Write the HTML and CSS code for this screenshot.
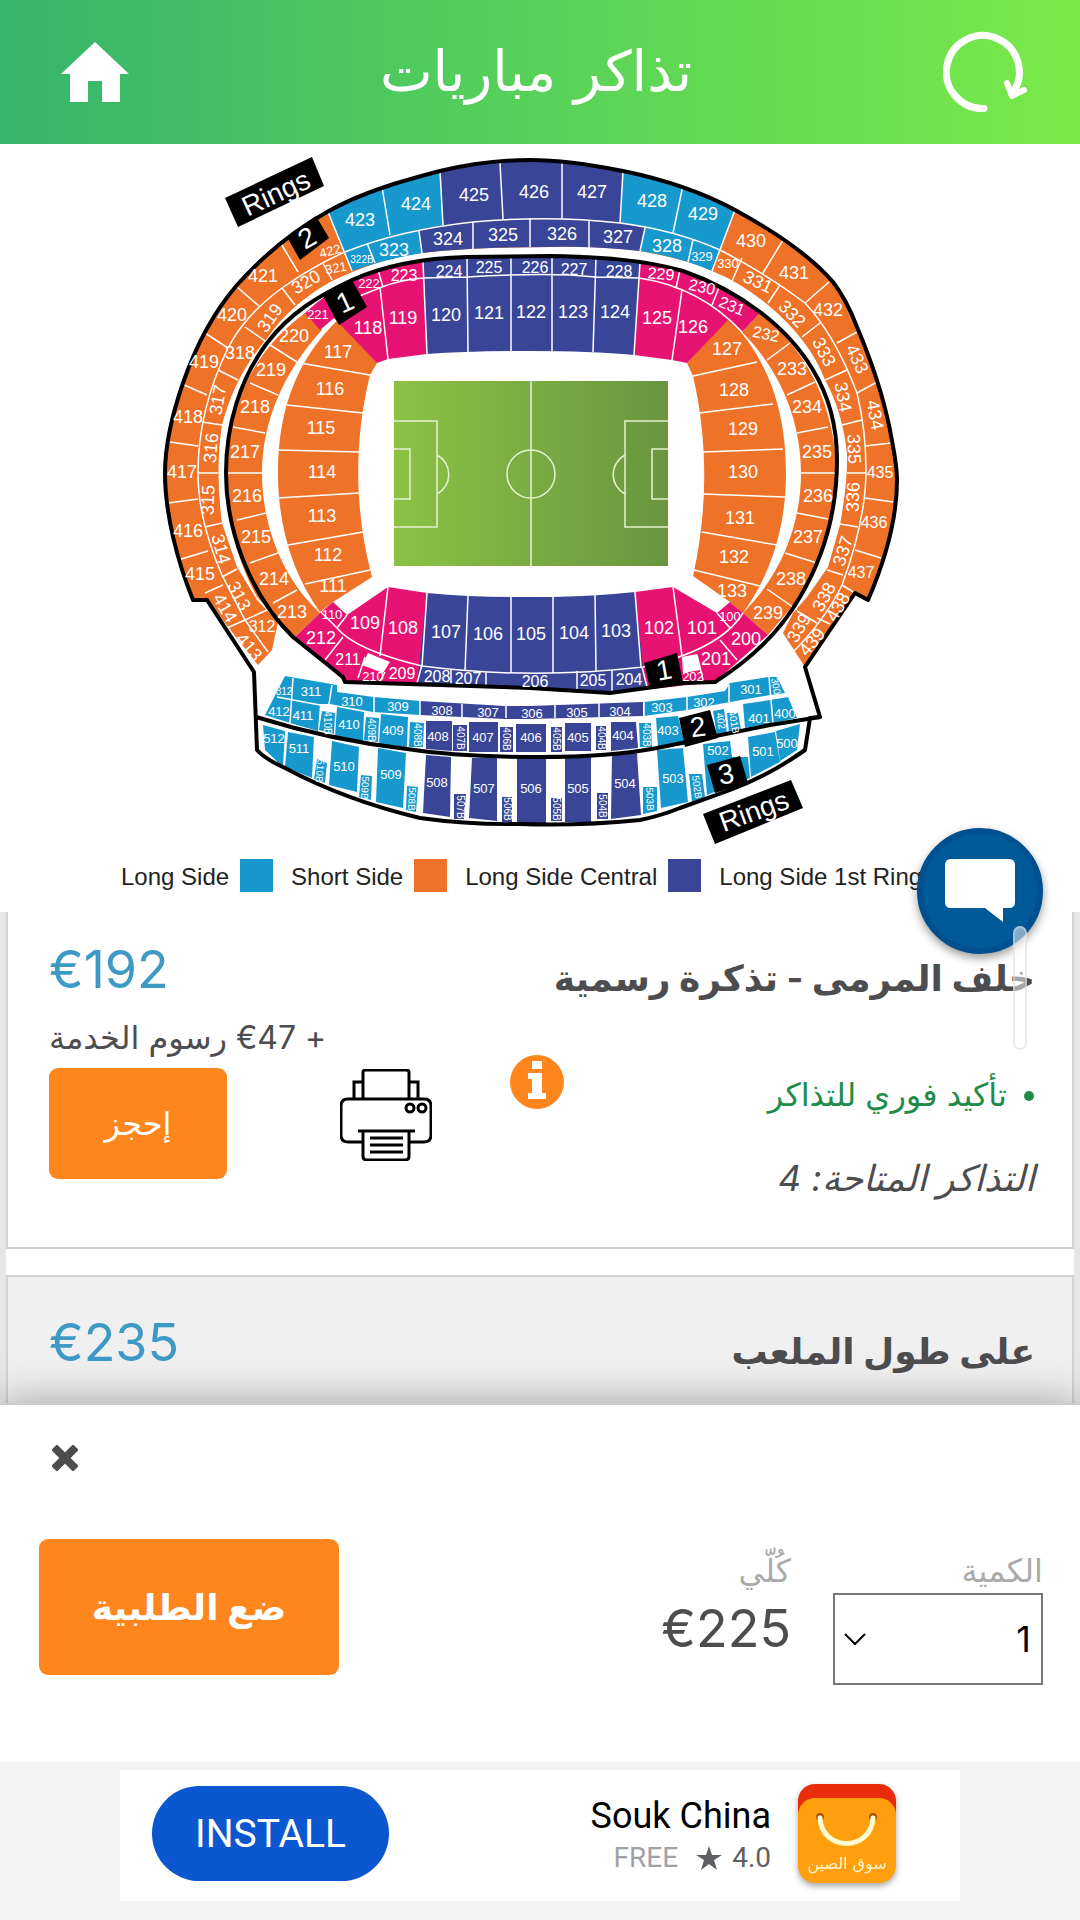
FILE: index.html
```html
<!DOCTYPE html>
<html lang="ar" dir="rtl">
<head>
    <meta charset="UTF-8">
    <meta name="viewport" content="width=device-width, initial-scale=1.0">
    <title>تذاكر مباريات</title>
    <link rel="stylesheet" href="styles.css">
</head>
<body>
    <header class="top-bar">
        <button class="icon-button" type="button" aria-label="تحديث">
            <svg width="84" height="84" viewBox="0 0 84 84" fill="none" stroke="#fff" stroke-linecap="round" stroke-linejoin="round">
                <path d="M41 78.5A36.5 36.5 0 1 1 69 64" stroke-width="7"/>
                <path d="M64 53L69 66L81 60" stroke-width="6"/>
            </svg>
        </button>
        <h1>تذاكر مباريات</h1>
        <a class="icon-button" href="#" aria-label="الرئيسية">
            <svg width="68" height="60" viewBox="0 0 68 60">
                <path d="M34 0L68 32H59V60H41V39H27V60H9V32H0Z" fill="#fff"/>
            </svg>
        </a>
    </header>

    <section class="stadium">
        <svg class="stadium-map" viewBox="0 144 1080 704" role="img" aria-label="Stadium map">
            <defs>
                <linearGradient id="grass">
                    <stop offset="0" stop-color="#8bc244"/>
                    <stop offset="1" stop-color="#69953f"/>
                </linearGradient>
            </defs>

            <!-- Upper ring -->
            <path class="short" d="M207 600H193C178 563 165 515 165 473C165 442 173 412 183 383C195 348 213 313 237 285C263 256 293 231 327 212C362 192 402 181 440 171C469 164 500 160 530 160C561 160 593 165 623 171C662 179 700 191 735 210C770 229 808 253 833 282C843 295 851 311 857 327C871 360 883 395 890 430C893 447 897 463 897 480C897 521 884 563 868 600L855 593L805 667L783 633L793 613L807 597L828 567L840 525Q848 480 847 453Q842 410 825 380Q810 340 768 305Q740 282 712 271Q690 260 640 251Q590 245 550 247Q470 247 422 253Q380 258 330 282Q290 305 268 337Q235 375 222 425Q215 470 222 523L237 567L257 600L278 622L272 650L258 665Z"/>
            <path class="long" d="M327 212C362 192 402 181 440 171L443 225L419 231L422 253Q385 259 352 271Z"/>
            <path class="long" d="M735 210C700 191 662 179 623 171L620 223L645 228L640 251Q680 257 712 271Z"/>
            <path class="central" d="M440 171C469 164 500 160 530 160C561 160 593 165 623 171L620 223L645 228L640 251Q590 246 550 247Q470 247 422 253L419 230L443 225Z"/>
            <path class="line" d="M268 652L245 620L222 575Q198 520 198 473Q198 410 228 348Q245 315 282 288Q315 265 345 252Q400 230 473 222Q550 215 620 223Q675 230 720 250Q765 273 805 303Q835 335 857 393Q866 430 866 470Q866 520 842 585Q825 620 793 652"/>
            <path class="line" d="M382 187L390 235M440 171L443 225M500 163L503 219M562 162V219M623 171L620 223M683 185L673 233M735 210L712 271M783 240L763 273M829 282L805 303M857 332L837 343M877 382L857 393M891 443L865 446M893 502L865 498M881 558L855 550M855 593L842 585M830 624L817 618M328 212L352 271M280 242L298 272M237 287L259 306M205 333L228 348M182 384L207 395M170 442L198 446M168 503L198 499M178 560L208 551M205 593L223 585M227 628L245 620"/>
            <path class="line" d="M323 263L332 280M282 288L295 305M245 327L268 343M218 370L238 380M202 422L222 425M198 473H218M205 527L222 523M222 577L237 569M245 620L267 610M367 243L375 263M419 231L422 253M473 222V249M530 218V247M589 220V248M645 228L640 251M693 240L688 262M742 258L732 281M780 285L768 303M820 323L802 337M847 370L825 380M862 420L842 425M866 473H847M858 527L840 524M843 575L827 570M817 623L797 611"/>

            <!-- First ring, top and sides -->
            <path class="short" d="M305 313L322 330C285 370 262 420 262 473C262 525 282 578 320 613L295 637L257 597Q226 540 226 473Q228 370 305 313Z"/>
            <path class="short" d="M760 313L742 332C780 370 801 420 801 473C801 525 781 575 743 613L768 635L800 597Q837 540 837 473Q832 370 760 313Z"/>
            <path class="short" d="M340 318C300 355 278 405 278 473C278 525 292 573 320 612L333 602L372 577C354 510 354 440 370 375L377 363Z"/>
            <path class="short" d="M728 318C765 355 786 405 786 473C786 525 772 573 743 613L730 602L693 576C708 510 708 440 693 376L687 363Z"/>
            <path class="first" d="M305 313Q350 270 423 260L427 354L388 359L377 363L334 318L320 330Z"/>
            <path class="first" d="M760 313Q710 270 640 263L634 355L672 360L687 363L728 320L742 332Z"/>
            <path class="central" d="M423 260Q467 255 550 256Q600 256 640 263L634 355Q590 351 530 351Q470 351 427 354Z"/>
            <path class="line" d="M340 310L362 295L382 287Q400 280 423 278L467 277Q550 272 595 277L639 278Q700 287 742 332M380 287L388 359M423 262L427 354M467 258L468 352M511 258V351M552 258V351M596 257L593 352M640 263L634 355M682 290L672 360M378 270L383 287M680 270L676 288M720 285L712 305"/>
            <path class="line" d="M267 343L297 362M250 383L278 395M233 427L265 433M227 473H262M237 520L266 513M250 563L278 553M273 603L297 590M767 360L790 343M787 395L815 382M797 433L828 427M801 473H835M797 513L828 519M785 553L817 563M767 589L797 610"/>
            <path class="line" d="M300 363L370 375M287 405L363 413M279 450L359 452M278 498L359 493M288 545L363 532M305 584L370 570M693 376L757 362M699 413L773 404M703 452L783 449M703 494L785 497M702 532L777 545M694 570L760 586"/>

            <!-- First ring, bottom -->
            <path class="first" d="M333 602L347 615L388 587L427 593L420 684L345 682L295 637L320 613Z"/>
            <path class="first" d="M730 602L717 613L673 587L635 592L643 690L715 682L768 635L743 613Z"/>
            <path class="central" d="M427 593Q470 597 512 597H553Q600 596 635 592L643 667L648 689L610 693L530 688L417 684Z"/>
            <path class="line" d="M321 612L337 628Q355 650 422 666Q530 680 643 667Q720 650 743 613M337 628L347 615M388 587L380 656M427 593L422 666M468 596L465 671M511 597V673M553 597V673M595 595L596 671M635 592L641 667M673 587L682 656M717 613L730 628M343 637L325 660M365 657L358 678M385 672L379 683M422 665L417 683M451 670V684M486 672V686M577 671V691M612 670V692M642 667L647 687M697 655L703 680M720 640L737 660"/>
            <path class="blank" d="M368 653L390 662L383 673L362 665ZM682 657L697 654L700 670L683 673Z"/>

            <!-- Pitch -->
            <rect x="394" y="381" width="274" height="185" fill="url(#grass)"/>
            <path class="chalk" d="M531 381V566M394 421H437V527H394M394 449H410V499H394M437 455A22 22 0 0 1 437 494M668 421H625V527H668M668 449H652V499H668M625 455A22 22 0 0 0 625 494"/>
            <circle class="chalk" cx="531" cy="474" r="24"/>

            <!-- Second ring, bottom -->
            <path class="long" d="M285 676L337 685V692L374 697L420 701V715L373 712L330 704H320L318 731L290 723L265 715Z"/>
            <path class="long" d="M644 702L687 697L725 691L730 683L768 677H777L785 693L770 695L730 702L687 710L644 716Z"/>
            <path class="central" d="M420 701L505 706H530L643 702V716L530 719H505L420 715Z"/>
            <path class="long" d="M322 711L335 713L334 734L319 730ZM337 707L364 712L363 741L335 736ZM366 717L379 718L378 742L364 740ZM381 714L408 717L407 747L379 744ZM410 722L424 723L423 747H409ZM639 723H651L652 747H640ZM656 718L678 716L685 745L658 747ZM713 711L724 709L727 733L717 736ZM727 713H738L741 730L729 733ZM743 704L770 700L788 697L797 718L772 723L745 728Z"/>
            <path class="central" d="M426 721H452V751L426 749ZM453 725H467V751H453ZM469 722H498V752H469ZM500 727H513V752H500ZM516 724H546V752H516ZM551 727H562V752H551ZM565 723H591V751H565ZM596 726H606V750H596ZM611 722H636L638 748L611 751Z"/>
            <path class="line" d="M293 678L290 723M332 685L329 704M374 697V712M277 697L320 705M420 701V715M462 704V717M506 706V718M555 705V718M599 703V717M644 702V716M687 697V710M729 685V702M769 677L773 723"/>

            <!-- Third ring -->
            <path class="long" d="M263 725L285 731L283 767L265 750ZM288 732L314 737L312 778L285 767ZM317 759L327 763L325 783L314 779ZM332 741L359 747L357 792L329 785ZM361 775L372 776L371 800L359 797ZM378 748L406 753L403 808L376 802ZM407 786L418 787L416 812L406 810ZM643 787H657V811L643 814ZM657 750L683 748L688 802L661 808ZM689 774H702L705 797L692 802ZM703 744L730 741L732 757H748L750 778L707 795ZM748 737L775 732L780 762L751 777ZM776 731L800 724L797 750L780 761Z"/>
            <path class="central" d="M426 755L451 757L450 817L423 813ZM454 794H466L464 819H454ZM472 758H497V821L469 818ZM502 797H512V822H502ZM517 758H546V823H517ZM551 798H562V821H551ZM565 757H591V822H565ZM597 793H608V819H597ZM612 755L637 753L641 815L611 819Z"/>

            <!-- Ring outlines -->
            <path class="outline" d="M207 600H193C178 563 165 515 165 473C165 442 173 412 183 383C195 348 213 313 237 285C263 256 293 231 327 212C362 192 402 181 440 171C469 164 500 160 530 160C561 160 593 165 623 171C662 179 700 191 735 210C770 229 808 253 833 282C843 295 851 311 857 327C871 360 883 395 890 430C893 447 897 463 897 480C897 521 884 563 868 600L855 593L805 667L820 717L810 718L805 750Q770 775 730 790L680 808Q660 816 640 820Q580 826 520 824Q470 825 420 818Q345 800 285 768Q265 759 257 750L254 672Z"/>
            <path class="outline" d="M256 717Q330 740 407 749Q460 757 540 757Q610 757 657 748L770 725L820 717"/>
            <path class="outline" d="M345 682L343 677L293 637C250 595 226 530 226 473C226 425 240 379 267 343C290 313 318 296 352 280C388 264 428 258 467 257L550 256C596 257 642 259 683 271C712 281 736 294 760 312C781 328 800 348 813 370C830 398 837 430 837 460C837 510 825 555 800 597C780 632 750 660 715 682L683 683L610 693L530 688Z"/>

            <!-- Section numbers -->
            <g class="numbers">
                <text x="360" y="220">423</text><text x="416" y="204">424</text><text x="474" y="195">425</text><text x="534" y="192">426</text>
                <text x="592" y="192">427</text><text x="652" y="201">428</text><text x="703" y="214">429</text><text x="751" y="241">430</text>
                <text x="794" y="273">431</text><text x="828" y="310">432</text><text x="263" y="276">421</text><text x="232" y="315">420</text>
                <text x="204" y="362">419</text><text x="188" y="417">418</text><text x="182" y="472">417</text><text x="188" y="531">416</text>
                <text x="200" y="574">415</text>
                <text transform="translate(857 359) rotate(65)">433</text><text transform="translate(875 415) rotate(80)">434</text>
                <text transform="translate(838 607) rotate(-60)">438</text><text transform="translate(812 642) rotate(-50)">439</text>
                <text transform="translate(225 608) rotate(60)">414</text><text transform="translate(249 647) rotate(50)">413</text>
                <text x="448" y="239">324</text><text x="503" y="235">325</text><text x="562" y="234">326</text><text x="618" y="237">327</text>
                <text x="667" y="246">328</text><text x="394" y="250">323</text><text x="240" y="353">318</text>
                <text transform="translate(758 282) rotate(25)">331</text><text transform="translate(792 314) rotate(45)">332</text>
                <text transform="translate(824 352) rotate(62)">333</text><text transform="translate(843 397) rotate(80)">334</text>
                <text transform="translate(854 449) rotate(88)">335</text><text transform="translate(853 497) rotate(-88)">336</text>
                <text transform="translate(843 551) rotate(-72)">337</text><text transform="translate(824 597) rotate(-62)">338</text>
                <text transform="translate(799 628) rotate(-60)">339</text><text transform="translate(306 282) rotate(-30)">320</text>
                <text transform="translate(270 318) rotate(-55)">319</text><text transform="translate(218 400) rotate(-80)">317</text>
                <text transform="translate(211 448) rotate(-85)">316</text><text transform="translate(208 500) rotate(-88)">315</text>
                <text transform="translate(221 549) rotate(75)">314</text><text transform="translate(239 596) rotate(62)">313</text>
                <text x="792" y="369">233</text><text x="807" y="407">234</text>
                <text x="817" y="452">235</text><text x="818" y="496">236</text><text x="808" y="537">237</text><text x="791" y="579">238</text>
                <text x="768" y="613">239</text><text x="746" y="639">200</text><text x="716" y="659">201</text>
                <text x="321" y="638">212</text><text x="292" y="612">213</text><text x="274" y="579">214</text><text x="256" y="537">215</text>
                <text x="247" y="496">216</text><text x="245" y="452">217</text><text x="255" y="407">218</text><text x="271" y="370">219</text>
                <text x="294" y="336">220</text>
                <text x="368" y="328">118</text><text x="403" y="318">119</text><text x="446" y="315">120</text><text x="489" y="313">121</text>
                <text x="531" y="312">122</text><text x="573" y="312">123</text><text x="615" y="312">124</text><text x="657" y="318">125</text>
                <text x="693" y="327">126</text><text x="727" y="349">127</text><text x="734" y="390">128</text><text x="743" y="429">129</text>
                <text x="743" y="472">130</text><text x="740" y="518">131</text><text x="734" y="557">132</text><text x="732" y="591">133</text>
                <text x="702" y="628">101</text><text x="659" y="628">102</text><text x="616" y="631">103</text><text x="574" y="633">104</text>
                <text x="531" y="634">105</text><text x="488" y="634">106</text><text x="446" y="632">107</text><text x="403" y="628">108</text>
                <text x="365" y="623">109</text><text x="333" y="586">111</text><text x="328" y="555">112</text><text x="322" y="516">113</text>
                <text x="322" y="472">114</text><text x="321" y="428">115</text><text x="330" y="389">116</text><text x="338" y="352">117</text>
            </g>
            <g class="numbers mid">
                <text x="880" y="472">435</text><text x="874" y="522">436</text><text x="861" y="572">437</text><text x="262" y="626">312</text>
                <text x="404" y="275">223</text><text x="449" y="271">224</text><text x="489" y="267">225</text><text x="535" y="267">226</text>
                <text x="574" y="269">227</text><text x="619" y="271">228</text>
                <text transform="translate(661 274) rotate(5)">229</text><text transform="translate(702 287) rotate(12)">230</text>
                <text transform="translate(732 306) rotate(22)">231</text><text transform="translate(766 334) rotate(12)">232</text>
                <text x="348" y="659">211</text>
                <text x="629" y="679">204</text><text x="593" y="680">205</text><text x="535" y="681">206</text><text x="468" y="678">207</text>
                <text x="437" y="676">208</text><text x="402" y="673">209</text>
            </g>
            <g class="numbers small">
                <text transform="translate(330 251) rotate(-15)">422</text><text x="702" y="256">329</text><text x="728" y="263">330</text>
                <text transform="translate(336 268) rotate(-10)">321</text><text x="369" y="283">222</text>
                <text x="318" y="314">221</text><text x="332" y="614">110</text><text x="730" y="616">100</text><text x="373" y="676">210</text>
                <text x="693" y="676">202</text>
                <text x="311" y="691">311</text><text x="352" y="701">310</text><text x="398" y="706">309</text><text x="442" y="710">308</text>
                <text x="488" y="712">307</text><text x="532" y="713">306</text><text x="577" y="712">305</text><text x="620" y="711">304</text>
                <text x="662" y="707">303</text><text x="704" y="702">302</text><text x="751" y="689">301</text>
                <text x="279" y="711">412</text><text x="303" y="715">411</text><text x="349" y="724">410</text><text x="393" y="730">409</text>
                <text x="438" y="736">408</text><text x="483" y="737">407</text><text x="531" y="737">406</text><text x="578" y="737">405</text>
                <text x="623" y="735">404</text><text x="668" y="730">403</text><text x="759" y="718">401</text><text x="785" y="713">400</text>
                <text x="274" y="738">512</text><text x="299" y="748">511</text><text x="344" y="766">510</text><text x="391" y="774">509</text>
                <text x="437" y="782">508</text><text x="484" y="788">507</text><text x="531" y="788">506</text><text x="578" y="788">505</text>
                <text x="625" y="783">504</text><text x="673" y="778">503</text><text x="718" y="750">502</text><text x="763" y="751">501</text>
                <text x="787" y="743">500</text>
            </g>
            <g class="numbers tiny">
                <text x="362" y="259">322B</text>
                <text x="284" y="691">312</text>
                <text transform="translate(776 686) rotate(80)">300</text>
                <text transform="translate(327 723) rotate(90)">410B</text><text transform="translate(371 730) rotate(90)">409B</text>
                <text transform="translate(417 735) rotate(90)">408B</text><text transform="translate(460 738) rotate(90)">407B</text>
                <text transform="translate(506 739) rotate(90)">406B</text><text transform="translate(556 739) rotate(90)">405B</text>
                <text transform="translate(601 738) rotate(90)">404B</text><text transform="translate(646 735) rotate(90)">403B</text>
                <text transform="translate(721 721) rotate(80)">402</text><text transform="translate(734 722) rotate(80)">401B</text>
                <text transform="translate(320 771) rotate(95)">510B</text><text transform="translate(365 788) rotate(92)">509B</text>
                <text transform="translate(412 799) rotate(92)">508B</text><text transform="translate(460 807) rotate(90)">507B</text>
                <text transform="translate(507 809) rotate(90)">506B</text><text transform="translate(556 809) rotate(90)">505B</text>
                <text transform="translate(602 806) rotate(90)">504B</text><text transform="translate(650 799) rotate(88)">503B</text>
                <text transform="translate(697 787) rotate(82)">502B</text>
            </g>

            <!-- Ring tags -->
            <path d="M225 198L312 157L324 186L238 227ZM287 237L316 216L329 238L300 260ZM323 296L352 280L367 307L339 325ZM644 663L677 653L683 683L650 688ZM679 718L710 710L718 738L685 747ZM707 765L740 756L748 783L715 793ZM703 814L791 780L803 808L715 844Z"/>
            <g class="numbers tag">
                <text transform="translate(276 193) rotate(-25)">Rings</text>
                <text transform="translate(307 238) rotate(-30)">2</text>
                <text transform="translate(345 302) rotate(-25)">1</text>
                <text transform="translate(664 670) rotate(-10)">1</text>
                <text transform="translate(698 727) rotate(-8)">2</text>
                <text transform="translate(726 774) rotate(-10)">3</text>
                <text transform="translate(754 811) rotate(-20)">Rings</text>
            </g>
        </svg>

        <ul class="legend" dir="ltr">
            <li>Long Side <span class="swatch swatch-long"></span></li>
            <li>Short Side <span class="swatch swatch-short"></span></li>
            <li>Long Side Central <span class="swatch swatch-central"></span></li>
            <li>Long Side 1st Ring</li>
        </ul>

        <button class="chat-button" type="button" aria-label="محادثة">
            <svg width="70" height="64" viewBox="0 0 70 64">
                <path d="M6 0H64Q70 0 70 6V43Q70 49 64 49H58V63L40 49H6Q0 49 0 43V6Q0 0 6 0Z" fill="#fff"/>
            </svg>
        </button>
        <span class="scroll-thumb"></span>
    </section>

    <main class="tickets">
        <article class="ticket">
            <div class="ticket-info">
                <h2>خلف المرمى - تذكرة رسمية</h2>
                <ul class="perks">
                    <li>تأكيد فوري للتذاكر</li>
                </ul>
                <p class="available">التذاكر المتاحة: 4</p>
            </div>
            <button class="info-button" type="button" aria-label="معلومات">
                <svg width="54" height="54" viewBox="0 0 54 54">
                    <circle cx="27" cy="27" r="27" fill="#ff861c"/>
                    <path d="M22 6H32V14H22ZM18 18H32V38H36V44H18V38H22V24H18Z" fill="#fff"/>
                </svg>
            </button>
            <svg class="printer" width="92" height="92" viewBox="0 0 92 92" fill="none" stroke="#000" stroke-width="3">
                <path d="M23 30V3Q23 1 26 1H66Q69 1 69 3V30M23 13H14V30M69 13H78V30"/>
                <path d="M23 73H8Q1 73 1 66V37Q1 30 8 30H84Q91 30 91 37V66Q91 73 84 73H69"/>
                <path d="M18 62H75M23 62V87Q23 91 27 91H65Q69 91 69 87V62M30 69H63M30 76H63M30 83H63"/>
                <circle cx="70" cy="39" r="4"/>
                <circle cx="82" cy="39" r="4"/>
            </svg>
            <div class="ticket-price">
                <strong class="price">€192</strong>
                <p class="fee">+ €47 رسوم الخدمة</p>
                <button class="book-button" type="button">إحجز</button>
            </div>
        </article>

        <article class="ticket shaded">
            <div class="ticket-info">
                <h2>على طول الملعب</h2>
            </div>
            <div class="ticket-price">
                <strong class="price">€235</strong>
            </div>
        </article>
    </main>

    <section class="order-sheet">
        <button class="close-button" type="button" aria-label="إغلاق">
            <svg width="26" height="26" viewBox="0 0 26 26">
                <path d="M5 5L21 21M21 5L5 21" stroke="#4d4d50" stroke-width="8" stroke-linecap="square"/>
            </svg>
        </button>
        <div class="order-row">
            <div class="quantity">
                <label for="quantity">الكمية</label>
                <select id="quantity">
                    <option>1</option>
                    <option>2</option>
                    <option>3</option>
                    <option>4</option>
                </select>
            </div>
            <div class="total">
                <span class="total-label">كُلّي</span>
                <span class="total-value">€225</span>
            </div>
            <button class="order-button" type="button">ضع الطلبية</button>
        </div>
    </section>

    <aside class="ad">
        <div class="ad-card" dir="ltr">
            <button class="install-button" type="button">INSTALL</button>
            <div class="ad-text">
                <span class="ad-title">Souk China</span>
                <span class="ad-meta">
                    <span class="ad-free">FREE</span>
                    <svg width="26" height="24" viewBox="0 0 26 24">
                        <path d="M13 0L16 9H26L18 14L21 24L13 18L5 24L8 14L0 9H10Z" fill="#5f6064"/>
                    </svg>
                    4.0
                </span>
            </div>
            <svg class="ad-icon" width="98" height="99" viewBox="0 0 98 99">
                <rect width="98" height="60" rx="17" fill="#e92c0b"/>
                <rect y="14" width="98" height="85" rx="17" fill="#ff9f0d"/>
                <circle cx="22" cy="33" r="4" fill="#a8540c"/>
                <circle cx="75" cy="33" r="4" fill="#a8540c"/>
                <path d="M22 34C24 68 73 68 75 34" fill="none" stroke="#fffbd2" stroke-width="5" stroke-linecap="round"/>
                <text x="49" y="85">سوق الصين</text>
            </svg>
        </div>
    </aside>
</body>
</html>
```
FILE: styles.css
```css
* {
    box-sizing: border-box;
}

body {
    margin: 0;
    height: 100vh;
    display: flex;
    flex-direction: column;
    background-color: #fff;
    color: #4d4d50;
    font-family: Inter, "DejaVu Sans", sans-serif;
}

h1, h2, p, ul {
    margin: 0;
    padding: 0;
}

ul {
    list-style: none;
}

button {
    border: none;
    padding: 0;
    background: none;
    font-family: inherit;
    cursor: pointer;
}

svg {
    display: block;
}

.top-bar {
    display: flex;
    align-items: center;
    justify-content: space-between;
    padding: 30px 53px 30px 61px;
    background: linear-gradient(to right, #35b46b, #58d159 50%, #79ea48);
}

.top-bar h1 {
    color: #fff;
    font-family: "DejaVu Sans", sans-serif;
    font-size: 56px;
    font-weight: 400;
    line-height: 60px;
}

/* Stadium map */
.stadium {
    position: relative;
}

.stadium-map {
    width: 100%;
}

.long {
    fill: #1899ce;
}

.short {
    fill: #ee7227;
}

.central {
    fill: #394698;
}

.first {
    fill: #e61372;
}

.blank {
    fill: #fff;
}

.line,
.chalk {
    fill: none;
    stroke: #fff;
    stroke-width: 1.5;
}

.chalk {
    stroke: #e4f2d0;
}

.outline {
    fill: none;
    stroke: #000;
    stroke-width: 4;
    stroke-linejoin: round;
}

.numbers {
    fill: #fff;
    font-family: "Liberation Sans", Arial, sans-serif;
    font-size: 18px;
    text-anchor: middle;
    dominant-baseline: central;
    direction: ltr;
}

.numbers.mid {
    font-size: 16px;
}

.numbers.small {
    font-size: 13px;
}

.numbers.tiny {
    font-size: 10px;
}

.numbers.tag {
    font-size: 28px;
}

.legend {
    display: flex;
    gap: 18px;
    padding: 11px 121px 20px;
    color: #222;
    font-family: "Liberation Sans", Arial, sans-serif;
    font-size: 24px;
    line-height: 36px;
    white-space: nowrap;
}

.legend li {
    display: flex;
    gap: 11px;
    height: 33px;
}

.swatch {
    width: 33px;
    height: 33px;
}

.swatch-long {
    background-color: #1899ce;
}

.swatch-short {
    background-color: #ee7227;
}

.swatch-central {
    background-color: #394698;
}

.chat-button {
    position: absolute;
    right: 37px;
    bottom: -42px;
    width: 126px;
    height: 126px;
    display: flex;
    align-items: center;
    justify-content: center;
    border: 6px solid #00508f;
    border-radius: 50%;
    background-color: #005a99;
    box-shadow: 0 4px 10px rgba(0, 0, 0, 0.4);
    z-index: 2;
}

.scroll-thumb {
    position: absolute;
    right: 53px;
    bottom: -138px;
    width: 14px;
    height: 124px;
    border: 2px solid rgba(215, 215, 215, 0.5);
    border-radius: 7px;
    background-color: rgba(255, 255, 255, 0.5);
    z-index: 3;
}

/* Ticket list */
.tickets {
    flex: 1 1 0;
    min-height: 0;
    overflow: hidden;
    display: flex;
    flex-direction: column;
    gap: 26px;
    border: solid #e6e6e6;
    border-width: 0 6px;
}

.ticket {
    flex: none;
    display: flex;
    align-items: flex-start;
    border: 2px solid #d2d2d2;
    padding: 36px 37px 45px 41px;
}

.ticket:first-child {
    border-top: none;
    padding-top: 28px;
}

.ticket.shaded {
    background-color: #f0f0f0;
}

.ticket-info {
    flex: 1;
    min-width: 0;
    white-space: nowrap;
}

.ticket h2 {
    padding-top: 12px;
    font-size: 36px;
    line-height: 52px;
}

.perks {
    margin-top: 64px;
    padding-right: 28px;
    list-style: disc;
    color: #218c4a;
    font-size: 32px;
    line-height: 54px;
}

.available {
    margin-top: 32px;
    font-size: 36px;
    font-style: italic;
    line-height: 48px;
}

.info-button {
    margin: 115px 0 0 78px;
}

.printer {
    margin: 129px 0 0 113px;
}

.ticket-price {
    display: flex;
    flex-direction: column;
    align-items: flex-end;
}

.ticket:first-child .ticket-price {
    width: 291px;
    margin-right: -113px;
}

.price {
    color: #3e9ac5;
    font-size: 52px;
    font-weight: 400;
    line-height: 60px;
}

.fee {
    margin: 14px 0 6px;
    font-size: 32px;
    line-height: 48px;
    white-space: nowrap;
}

.book-button,
.order-button {
    border-radius: 9px;
    background-color: #ff861c;
    color: #fff;
}

.book-button {
    width: 178px;
    height: 111px;
    font-size: 32px;
}

/* Order sheet */
.order-sheet {
    position: relative;
    padding: 40px 37px 77px 39px;
    border-top: 2px solid #ccc;
    background-color: #fff;
    box-shadow: 0 0 40px rgba(0, 0, 0, 0.35);
    z-index: 4;
}

.close-button {
    display: block;
    margin: 0 auto 0 13px;
}

.order-row {
    display: flex;
    align-items: flex-start;
    padding-top: 68px;
}

.quantity,
.total {
    display: flex;
    flex-direction: column;
    padding-top: 10px;
}

.quantity {
    width: 210px;
}

.quantity label,
.total-label {
    color: #aaa;
    font-size: 32px;
    line-height: 44px;
}

.quantity select {
    appearance: none;
    height: 92px;
    padding: 0 10px;
    border: 2px solid #777;
    border-radius: 0;
    background: url("data:image/svg+xml,%3Csvg xmlns='http://www.w3.org/2000/svg' width='24' height='14'%3E%3Cpath d='M2 2l10 10L22 2' fill='none' stroke='%23000' stroke-width='2'/%3E%3C/svg%3E") no-repeat left 8px center;
    color: #000;
    font-family: inherit;
    font-size: 36px;
}

.total {
    margin-right: 42px;
}

.total-value {
    font-size: 52px;
    line-height: 72px;
}

.order-button {
    width: 300px;
    height: 136px;
    margin-right: auto;
    font-size: 36px;
    font-weight: 700;
}

/* Ad banner */
.ad {
    position: relative;
    padding: 8px 120px 19px;
    background-color: #f4f4f4;
    z-index: 5;
}

.ad-card {
    display: flex;
    align-items: center;
    padding: 14px 64px 18px 32px;
    background-color: #fff;
    font-family: Roboto, sans-serif;
}

.install-button {
    width: 237px;
    height: 95px;
    border-radius: 48px;
    background-color: #0b57d0;
    color: #fff;
    font-size: 39px;
}

.ad-text {
    margin-left: auto;
    margin-right: 27px;
    padding-top: 6px;
    text-align: right;
}

.ad-title {
    display: block;
    color: #000;
    font-size: 36px;
    line-height: 42px;
}

.ad-meta {
    display: flex;
    align-items: center;
    justify-content: flex-end;
    gap: 10px;
    color: #5f6064;
    font-size: 28px;
    line-height: 42px;
}

.ad-free {
    margin-right: 8px;
    color: #a0a1a5;
}

.ad-icon {
    filter: drop-shadow(0 3px 3px rgba(0, 0, 0, 0.35));
}

.ad-icon text {
    fill: #fff6d0;
    font-family: "DejaVu Sans", sans-serif;
    font-size: 16px;
    text-anchor: middle;
}
```
